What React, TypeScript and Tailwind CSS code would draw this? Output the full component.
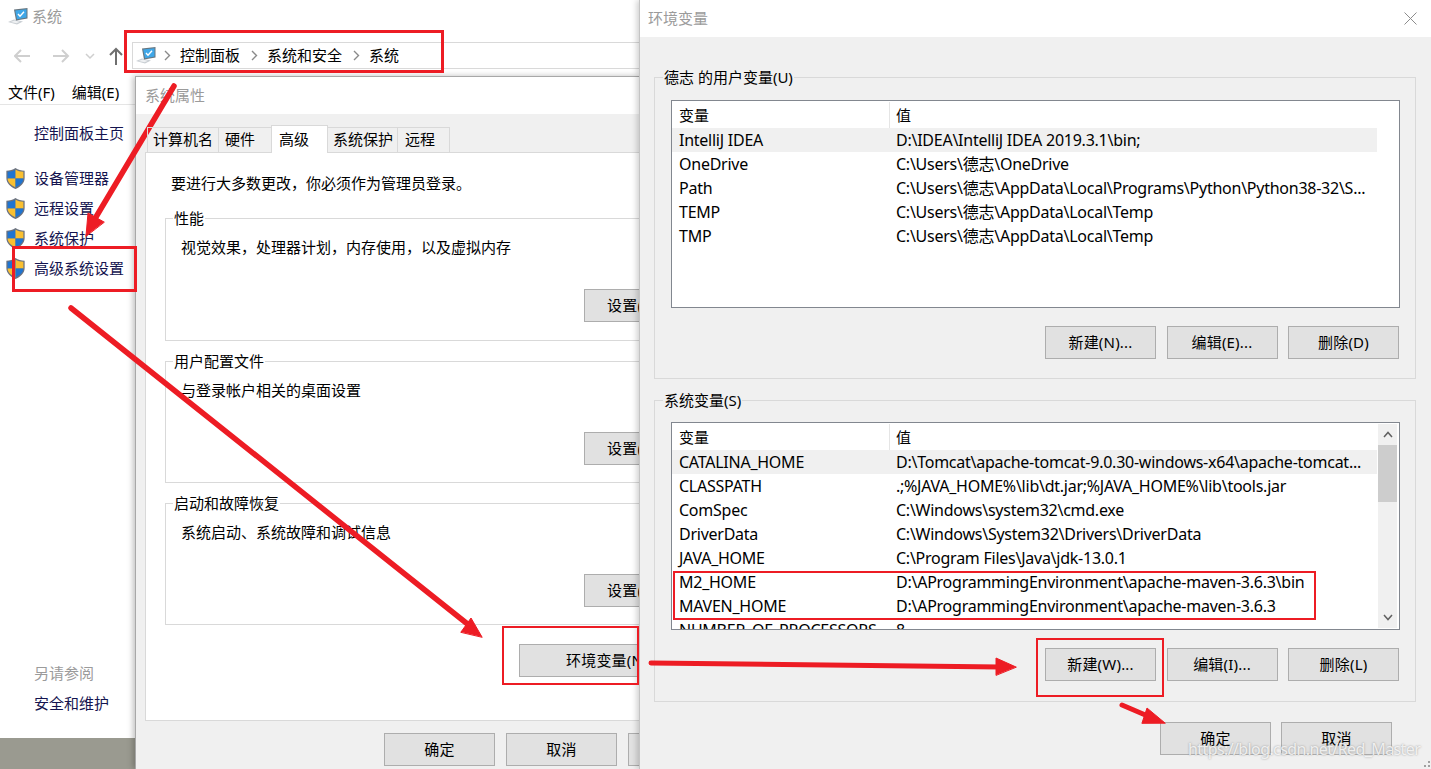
import React from "react";

const FONT = "font-['Noto_Sans','Noto_Sans_CJK_SC',sans-serif]";

function Shield() {
  return (
    <svg width="19" height="21" viewBox="0 0 18 20" className="shrink-0">
      <path d="M9 0 C6.500 2 3.500 2.500 .3 2.500 V9.500 C.3 14.500 4.500 18 9 20 C13.500 18 17.700 14.500 17.700 9.500 V2.500 C14.500 2.500 11.500 2 9 0Z" fill="#6b7280" />
      <path d="M9 1.500 C7 3 4.500 3.600 1.500 3.600 V10 H9Z" fill="#1f74d0" />
      <path d="M9 1.500 C11 3 13.500 3.600 16.500 3.600 V10 H9Z" fill="#f9c032" />
      <path d="M1.500 10 H9 V18.500 C5 16.500 1.500 14 1.500 10Z" fill="#f9c032" />
      <path d="M16.500 10 H9 V18.500 C13 16.500 16.500 14 16.500 10Z" fill="#1f74d0" />
    </svg>
  );
}

function PcIcon() {
  return (
    <svg width="20" height="17" viewBox="0 0 20 17" className="shrink-0">
      <path d="M0 14 L6 11.500 L15 13.500 L9 16.500Z" fill="#c9ced3" />
      <path d="M2.500 14 L6.500 12.500 L12 13.700 L8.500 15.300Z" fill="#eef0f2" />
      <path d="M6 1.500 L19.500 0 V10.500 L8 12.500Z" fill="#66757f" />
      <path d="M7.200 2.500 L18.500 1.200 V9.500 L9 11.200Z" fill="#3fa7e8" />
      <path d="M10 6 L12 8.200 L16 3.800" fill="none" stroke="#fff" strokeWidth="1.400" />
    </svg>
  );
}

function Chevron() {
  return (
    <svg width="7" height="11" viewBox="0 0 7 11" className="shrink-0">
      <path d="M1 1 L5.500 5.500 L1 10" fill="none" stroke="#8a8a8a" strokeWidth="1.400" />
    </svg>
  );
}

function Btn({ children, className = "", width = "w-[111px]" }: { children: React.ReactNode; className?: string; width?: string }) {
  return (
    <div className={`${width} h-[33px] shrink-0 bg-[#e1e1e1] border border-[#adadad] flex items-center justify-center text-[15px] tracking-[0.2px] text-black whitespace-nowrap overflow-hidden ${className}`}>
      {children}
    </div>
  );
}

function SideItem({ label }: { label: string }) {
  return (
    <div className="h-[30px] flex items-center gap-[9px] pl-[6px]">
      <Shield />
      <span className="text-[15px] text-[#14144f]">{label}</span>
    </div>
  );
}

function SystemWindow() {
  return (
    <div className="absolute left-0 top-0 w-[640px] h-[738px] bg-white flex flex-col overflow-hidden">
      <div className="h-[33px] flex items-center pl-[8px] gap-[4px] shrink-0">
        <PcIcon />
        <span className="text-[15px] text-[#9b9b9b]">系统</span>
      </div>
      <div className="h-[45px] flex items-center shrink-0 relative">
        <div className="flex items-center pl-[14px] w-[132px] shrink-0">
          <svg width="112" height="22" viewBox="0 0 112 22">
            <path d="M1 11 H16 M7 5 L1 11 L7 17" fill="none" stroke="#cfcfcf" strokeWidth="2" />
            <path d="M39 11 H54 M48 5 L54 11 L48 17" fill="none" stroke="#cfcfcf" strokeWidth="2" />
            <path d="M72 9 L76 13 L80 9" fill="none" stroke="#cfcfcf" strokeWidth="1.500" />
            <path d="M102 20 V4 M96 10 L102 4 L108 10" fill="none" stroke="#6f6f6f" strokeWidth="2" />
          </svg>
        </div>
        <div className="h-[27px] flex-1 border border-[#d9d9d9] flex items-center pl-[3px]">
          <PcIcon />
          <div className="ml-[8px]"><Chevron /></div>
          <span className="text-[15px] text-black ml-[9px]">控制面板</span>
          <div className="ml-[11px]"><Chevron /></div>
          <span className="text-[15px] text-black ml-[9px]">系统和安全</span>
          <div className="ml-[11px]"><Chevron /></div>
          <span className="text-[15px] text-black ml-[9px]">系统</span>
        </div>
      </div>
      <div className="h-[27px] flex items-center gap-[17px] pl-[8px] pt-[2px] border-b border-[#e5e5e5] shrink-0 text-[15px] text-black">
        <span>文件(F)</span>
        <span>编辑(E)</span>
      </div>
      <div className="flex flex-col flex-1 w-[136px]">
        <div className="mt-[17px] pl-[34px] text-[15px] text-[#14144f] whitespace-nowrap">控制面板主页</div>
        <div className="mt-[19px] flex flex-col">
          <SideItem label="设备管理器" />
          <SideItem label="远程设置" />
          <SideItem label="系统保护" />
          <SideItem label="高级系统设置" />
        </div>
        <div className="mt-auto pl-[34px] pb-[24px] flex flex-col gap-[8px] text-[15px] leading-[22px]">
          <span className="text-[#9b9b9b]">另请参阅</span>
          <span className="text-[#14144f]">安全和维护</span>
        </div>
      </div>
    </div>
  );
}

function Group({ title, desc, className = "" }: { title: string; desc: string; className?: string }) {
  return (
    <div className={`relative w-[520px] border border-[#d9d9d9] ${className}`}>
      <span className="absolute left-[7px] -top-[12px] px-[1px] bg-white text-[15px] leading-[22px] text-black">{title}</span>
      <div className="pl-[15px] pt-[17px] text-[15px] leading-[22px] text-black">{desc}</div>
      <div className="absolute left-[418px] top-[70px]">
        <Btn className="justify-start pl-[22px]">设置(S)...</Btn>
      </div>
    </div>
  );
}

function PropsDialog() {
  const tabs = [
    { t: "计算机名", c: "w-[71px] pl-[5px]" },
    { t: "硬件", c: "w-[53px] pl-[6px]" },
  ];
  const tabs2 = [
    { t: "系统保护", c: "w-[70px] pl-[5px]" },
    { t: "远程", c: "w-[52px] pl-[7px]" },
  ];
  return (
    <div className="absolute left-[135px] top-[76px] w-[505px] h-[693px] bg-[#f0f0f0] border-t border-l border-[#a8a8a8] shadow-[-2px_0_6px_rgba(0,0,0,0.25)] flex flex-col overflow-hidden">
      <div className="h-[37px] bg-white pl-[9px] flex items-center shrink-0">
        <span className="text-[15px] text-[#9b9b9b]">系统属性</span>
      </div>
      <div className="h-[38px] pl-[11px] flex items-end shrink-0 relative z-10">
        {tabs.map((x) => (
          <div key={x.t} className={`${x.c} h-[25px] border border-r-0 border-b-0 border-[#d9d9d9] text-[15px] leading-[23px] text-black`}>{x.t}</div>
        ))}
        <div className="w-[57px] h-[28px] -mb-[1px] bg-white border border-b-0 border-[#d9d9d9] pl-[7px] text-[15px] leading-[26px] text-black">高级</div>
        {tabs2.map((x) => (
          <div key={x.t} className={`${x.c} h-[25px] border border-l-0 border-b-0 border-[#d9d9d9] text-[15px] leading-[23px] text-black`}>{x.t}</div>
        ))}
      </div>
      <div className="ml-[9px] w-[600px] h-[569px] bg-white border border-[#d9d9d9] flex flex-col shrink-0">
        <div className="pl-[25px] pt-[19px] text-[15px] leading-[22px] text-black whitespace-nowrap">要进行大多数更改，你必须作为管理员登录。</div>
        <div className="ml-[19px] mt-[24px] flex flex-col gap-[20px]">
          <Group title="性能" desc="视觉效果，处理器计划，内存使用，以及虚拟内存" className="h-[123px]" />
          <Group title="用户配置文件" desc="与登录帐户相关的桌面设置" className="h-[122px]" />
          <Group title="启动和故障恢复" desc="系统启动、系统故障和调试信息" className="h-[122px]" />
        </div>
        <div className="ml-[373px] mt-[19px]">
          <Btn width="w-[160px]" className="justify-start pl-[46px]">环境变量(N)...</Btn>
        </div>
      </div>
      <div className="flex gap-[11px] ml-[248px] mt-[12px]">
        <Btn>确定</Btn>
        <Btn>取消</Btn>
        <Btn>应用(A)</Btn>
      </div>
    </div>
  );
}

type Row = [string, string];

function VarList({ rows, scroll = false, className = "" }: { rows: Row[]; scroll?: boolean; className?: string }) {
  return (
    <div className={`relative ml-[16px] mr-[15px] h-[208px] bg-white border border-[#82878f] overflow-hidden ${className}`}>
      <div className="w-[705px] flex flex-col text-[15px] text-black">
        <div className="h-[27px] pt-[1px] flex items-center shrink-0">
          <div className="w-[218px] h-full pl-[7px] border-r border-[#e5e5e5] flex items-center">变量</div>
          <div className="pl-[6px]">值</div>
        </div>
        {rows.map(([a, b], i) => (
          <div key={a} className={`h-[24px] flex items-center shrink-0 whitespace-nowrap text-[16px] tracking-[-0.25px] ${i === 0 ? "bg-[#f0f0f0]" : ""}`}>
            <div className="w-[217px] pl-[7px] overflow-hidden">{a}</div>
            <div className="pl-[7px]">{b}</div>
          </div>
        ))}
      </div>
      {scroll && (
        <div className="absolute right-[2px] top-[1px] bottom-[1px] w-[19px] bg-[#f0f0f0] flex flex-col">
          <div className="h-[21px] flex items-center justify-center shrink-0">
            <svg width="10" height="7" viewBox="0 0 10 7"><path d="M1 6 L5 1.500 L9 6" fill="none" stroke="#606060" strokeWidth="1.500" /></svg>
          </div>
          <div className="h-[57px] bg-[#cdcdcd] shrink-0" />
          <div className="flex-1" />
          <div className="h-[21px] flex items-center justify-center shrink-0">
            <svg width="10" height="7" viewBox="0 0 10 7"><path d="M1 1 L5 5.500 L9 1" fill="none" stroke="#606060" strokeWidth="1.500" /></svg>
          </div>
        </div>
      )}
    </div>
  );
}

function VarGroup({ title, rows, scroll, labels, listClass = "" }: { title: string; rows: Row[]; scroll?: boolean; labels: string[]; listClass?: string }) {
  return (
    <div className="relative w-[762px] h-[302px] border border-[#d9d9d9] flex flex-col">
      <span className="absolute left-[8px] -top-[12px] bg-[#f0f0f0] px-[1px] text-[15px] leading-[22px] text-black whitespace-nowrap">{title}</span>
      <VarList rows={rows} scroll={scroll} className={listClass} />
      <div className="flex justify-end gap-[10.500px] pr-[16px] mt-[18px]">
        {labels.map((l) => <Btn key={l}>{l}</Btn>)}
      </div>
    </div>
  );
}

function EnvDialog() {
  const user: Row[] = [
    ["IntelliJ IDEA", "D:\\IDEA\\IntelliJ IDEA 2019.3.1\\bin;"],
    ["OneDrive", "C:\\Users\\德志\\OneDrive"],
    ["Path", "C:\\Users\\德志\\AppData\\Local\\Programs\\Python\\Python38-32\\S..."],
    ["TEMP", "C:\\Users\\德志\\AppData\\Local\\Temp"],
    ["TMP", "C:\\Users\\德志\\AppData\\Local\\Temp"],
  ];
  const sys: Row[] = [
    ["CATALINA_HOME", "D:\\Tomcat\\apache-tomcat-9.0.30-windows-x64\\apache-tomcat..."],
    ["CLASSPATH", ".;%JAVA_HOME%\\lib\\dt.jar;%JAVA_HOME%\\lib\\tools.jar"],
    ["ComSpec", "C:\\Windows\\system32\\cmd.exe"],
    ["DriverData", "C:\\Windows\\System32\\Drivers\\DriverData"],
    ["JAVA_HOME", "C:\\Program Files\\Java\\jdk-13.0.1"],
    ["M2_HOME", "D:\\AProgrammingEnvironment\\apache-maven-3.6.3\\bin"],
    ["MAVEN_HOME", "D:\\AProgrammingEnvironment\\apache-maven-3.6.3"],
    ["NUMBER_OF_PROCESSORS", "8"],
  ];
  return (
    <div className="absolute left-[639px] top-0 w-[792px] h-[769px] bg-[#f0f0f0] border-l border-[#c4c4c4] shadow-[-2px_0_6px_rgba(0,0,0,0.2)] flex flex-col overflow-hidden">
      <div className="h-[37px] bg-white flex items-center justify-between pl-[8px] pr-[14px] shrink-0">
        <span className="text-[15px] text-[#9b9b9b]">环境变量</span>
        <svg width="13" height="13" viewBox="0 0 13 13"><path d="M.5 .5 L12.500 12.500 M12.500 .5 L.5 12.500" stroke="#8c8c8c" strokeWidth="1" /></svg>
      </div>
      <div className="ml-[14px] mt-[40px] flex flex-col gap-[21px]">
        <VarGroup title="德志 的用户变量(U)" rows={user} labels={["新建(N)...", "编辑(E)...", "删除(D)"]} listClass="mt-[22px]" />
        <VarGroup title="系统变量(S)" rows={sys} scroll labels={["新建(W)...", "编辑(I)...", "删除(L)"]} listClass="mt-[21px]" />
      </div>
      <div className="flex gap-[10px] ml-[520px] mt-[20px]">
        <Btn>确定</Btn>
        <Btn>取消</Btn>
      </div>
    </div>
  );
}

function Annotations() {
  const boxes = [
    "left-[124px] top-[30px] w-[320px] h-[43px] border-[3px]",
    "left-[12px] top-[246px] w-[125px] h-[46px] border-[3px]",
    "left-[502px] top-[626px] w-[137px] h-[59px] border-2",
    "left-[673px] top-[571px] w-[643px] h-[49px] border-2",
    "left-[1036px] top-[638px] w-[128px] h-[59px] border-2",
  ];
  return (
    <>
      {boxes.map((b) => (
        <div key={b} className={`absolute border-[#ed1c24] ${b}`} />
      ))}
      <svg className="absolute left-0 top-0 pointer-events-none" width="1431" height="769" viewBox="0 0 1431 769">
        <g fill="#ed1c24" stroke="#ed1c24" strokeLinecap="round">
          <path d="M174 86 L93 222" strokeWidth="5.500" fill="none" />
          <path d="M86 236 L88 213 L104 222Z" strokeWidth="1" />
          <path d="M71 308 L470 626" strokeWidth="5.500" fill="none" />
          <path d="M482 637 L471 618 L461 632Z" strokeWidth="1" />
          <path d="M651 663 L1000 667" strokeWidth="5" fill="none" />
          <path d="M1016 667 L996 658 L996 675Z" strokeWidth="1" />
          <path d="M1122 705 L1150 717" strokeWidth="5" fill="none" />
          <path d="M1165 723 L1147 708 L1142 723Z" strokeWidth="1" />
        </g>
        <g fill="#a0a0a0">
          <rect x="1428" y="761" width="2" height="2" />
          <rect x="1424" y="765" width="2" height="2" />
          <rect x="1428" y="765" width="2" height="2" />
        </g>
      </svg>
      <div className="absolute left-[1188px] top-[738px] text-[16px] tracking-[-0.6px] leading-[22px] text-white/80 [text-shadow:0_0_2px_rgba(120,120,120,0.8)] whitespace-nowrap">
        https://blog.csdn.net/Red_Master
      </div>
    </>
  );
}

export default function App() {
  return (
    <div className={`relative w-[1431px] h-[769px] overflow-hidden bg-[#9a9a90] ${FONT}`}>
      <SystemWindow />
      <PropsDialog />
      <EnvDialog />
      <Annotations />
    </div>
  );
}
